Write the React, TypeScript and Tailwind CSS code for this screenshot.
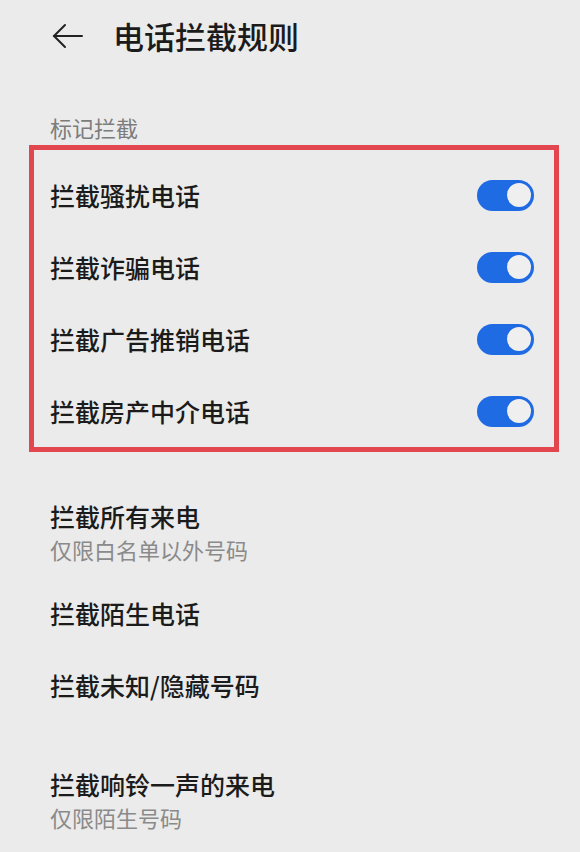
import React from "react";

function Toggle() {
  return (
    <div className="flex h-[31px] w-[57px] items-center justify-end rounded-full bg-[#1f6be3] pr-[1px]">
      <div className="h-[28px] w-[28px] rounded-full border-[2px] border-[#1f6be3] bg-[#efefef]" />
    </div>
  );
}

export default function App() {
  const marked = ["拦截骚扰电话", "拦截诈骗电话", "拦截广告推销电话", "拦截房产中介电话"];

  return (
    <div
      className="min-h-[852px] w-[580px] bg-[#ebebeb] text-[#1b1b1b]"
      style={{ fontFamily: '"Noto Sans CJK SC", "Noto Sans", sans-serif' }}
    >
      {/* Header */}
      <div className="flex h-[72px] items-center pl-[52px]">
        <svg width="31" height="26" viewBox="0 0 31 26" fill="none" stroke="#222" strokeWidth="2" strokeLinecap="round">
          <path d="M2 13H30" />
          <path d="M13 2L2 13L13 24" />
        </svg>
        <h1 className="ml-[30px] text-[31px] font-medium leading-[40px]">电话拦截规则</h1>
      </div>

      {/* Section label */}
      <div className="mt-[41px] pl-[50px] text-[22px] leading-[28px] text-[#7c7c7c]">标记拦截</div>

      {/* Marked numbers */}
      <div className="ml-[29px] mt-[4px] w-[530px] border-[5px] border-[#e2464f] pt-[9px]">
        {marked.map((label) => (
          <div key={label} className="flex h-[72px] items-center justify-between pl-[16px] pr-[20px]">
            <span className="text-[25px] font-medium leading-[32px]">{label}</span>
            <Toggle />
          </div>
        ))}
      </div>

      {/* Other rules */}
      <div className="pl-[50px]">
        <div className="mt-[48px] text-[25px] font-medium leading-[32px]">拦截所有来电</div>
        <div className="mt-[3px] text-[22px] leading-[28px] text-[#8a8a8a]">仅限白名单以外号码</div>

        <div className="mt-[34px] text-[25px] font-medium leading-[32px]">拦截陌生电话</div>

        <div className="mt-[40px] text-[25px] font-medium leading-[32px]">拦截未知/隐藏号码</div>

        <div className="mt-[67px] text-[25px] font-medium leading-[32px]">拦截响铃一声的来电</div>
        <div className="mt-[3px] text-[22px] leading-[28px] text-[#8a8a8a]">仅限陌生号码</div>
      </div>
    </div>
  );
}
